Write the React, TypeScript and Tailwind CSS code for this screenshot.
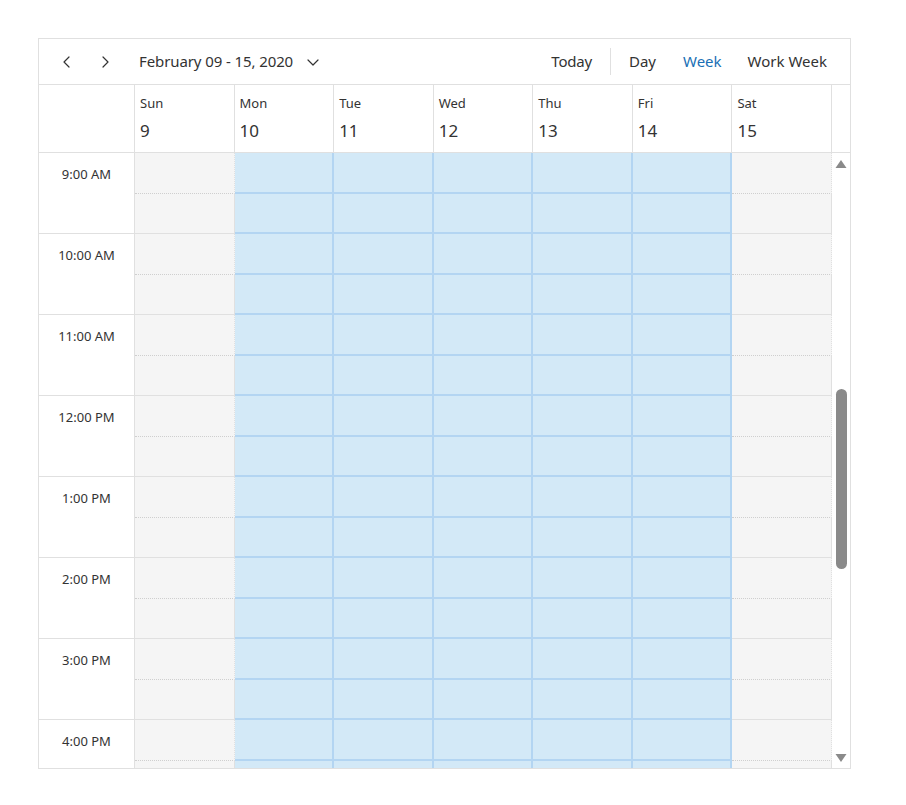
const days = [
  { name: 'Sun', num: 9, work: false },
  { name: 'Mon', num: 10, work: true },
  { name: 'Tue', num: 11, work: true },
  { name: 'Wed', num: 12, work: true },
  { name: 'Thu', num: 13, work: true },
  { name: 'Fri', num: 14, work: true },
  { name: 'Sat', num: 15, work: false },
]

const hours = ['9:00 AM', '10:00 AM', '11:00 AM', '12:00 PM', '1:00 PM', '2:00 PM', '3:00 PM', '4:00 PM']

function Chevron({ dir }: { dir: 'left' | 'right' | 'down' }) {
  const d = dir === 'left' ? 'M10 3 L5 8 L10 13' : dir === 'right' ? 'M6 3 L11 8 L6 13' : 'M3 6 L8 11 L13 6'
  return (
    <svg width="16" height="16" viewBox="0 0 16 16" fill="none" stroke="#333" strokeWidth="1.2" strokeLinecap="round" strokeLinejoin="round">
      <path d={d} />
    </svg>
  )
}

function DayColumn({ work }: { work: boolean }) {
  return (
    <div className="flex flex-col">
      {hours.map(h => (
        <div key={h} className="flex flex-col">
          {work ? (
            <>
              <div className="h-[41px] shrink-0 bg-[#d3e9f7] border-b-2 border-r-2 border-[#b3d5f2]" />
              <div className="h-[40px] shrink-0 bg-[#d3e9f7] border-b-2 border-r-2 border-[#b3d5f2]" />
            </>
          ) : (
            <>
              <div className="h-[41px] shrink-0 bg-[#f5f5f5] border-b border-dotted border-b-[#cfcfcf] border-r border-r-[#e0e0e0]" />
              <div className="h-[40px] shrink-0 bg-[#f5f5f5] border-b border-r border-[#e0e0e0]" />
            </>
          )}
        </div>
      ))}
    </div>
  )
}

export default function App() {
  return (
    <div className="p-[38px] bg-white" style={{ fontFamily: '"Noto Sans", "Open Sans", sans-serif' }}>
      <div className="w-[813px] h-[731px] border border-[#e0e0e0] flex flex-col text-[#333]">
        {/* toolbar */}
        <div className="h-[46px] shrink-0 flex items-center border-b border-[#e0e0e0]">
          <button className="ml-[20px] w-[16px] h-[16px] flex items-center justify-center"><Chevron dir="left" /></button>
          <button className="ml-[22px] w-[16px] h-[16px] flex items-center justify-center"><Chevron dir="right" /></button>
          <span className="ml-[26px] text-[15px] tracking-[-0.1px]">February 09 - 15, 2020</span>
          <span className="ml-[12px] flex items-center"><Chevron dir="down" /></span>
          <div className="ml-auto flex items-center h-full text-[15px]">
            <span className="tracking-[-0.2px]">Today</span>
            <span className="mx-[18px] w-px h-[27px] bg-[#e0e0e0]" />
            <span>Day</span>
            <span className="ml-[27px] text-[#1a6fb5]">Week</span>
            <span className="ml-[26px] mr-[23px]">Work Week</span>
          </div>
        </div>

        {/* header */}
        <div className="h-[68px] shrink-0 flex border-b border-[#e0e0e0]">
          <div className="w-[96px] shrink-0 border-r border-[#e0e0e0]" />
          <div className="w-[697px] grid grid-cols-7">
            {days.map(d => (
              <div key={d.name} className="border-r border-[#e0e0e0] pl-[5px] pt-[10px]">
                <div className="text-[13px] leading-[16px]">{d.name}</div>
                <div className="text-[17px] leading-[22px] mt-[9px]">{d.num}</div>
              </div>
            ))}
          </div>
          <div className="flex-1" />
        </div>

        {/* body */}
        <div className="flex-1 flex overflow-hidden">
          <div className="w-[96px] shrink-0 border-r border-[#e0e0e0] flex flex-col">
            {hours.map(h => (
              <div key={h} className="h-[81px] shrink-0 border-b border-[#e0e0e0] text-[13px] text-center pt-[12px]">
                {h}
              </div>
            ))}
          </div>
          <div className="w-[697px] grid grid-cols-7 content-start">
            {days.map(d => (
              <DayColumn key={d.name} work={d.work} />
            ))}
          </div>
          <div className="flex-1 relative bg-white">
            <svg className="absolute left-[3px] top-[6px]" width="12" height="10" viewBox="0 0 12 10">
              <path d="M6 1 L11.5 9 L0.5 9 Z" fill="#8a8a8a" />
            </svg>
            <div className="absolute left-[4px] top-[236px] w-[11px] h-[180px] rounded-full bg-[#8a8a8a]" />
            <svg className="absolute left-[3px] top-[600px]" width="12" height="10" viewBox="0 0 12 10">
              <path d="M0.5 1 L11.5 1 L6 9 Z" fill="#8a8a8a" />
            </svg>
          </div>
        </div>
      </div>
    </div>
  )
}
